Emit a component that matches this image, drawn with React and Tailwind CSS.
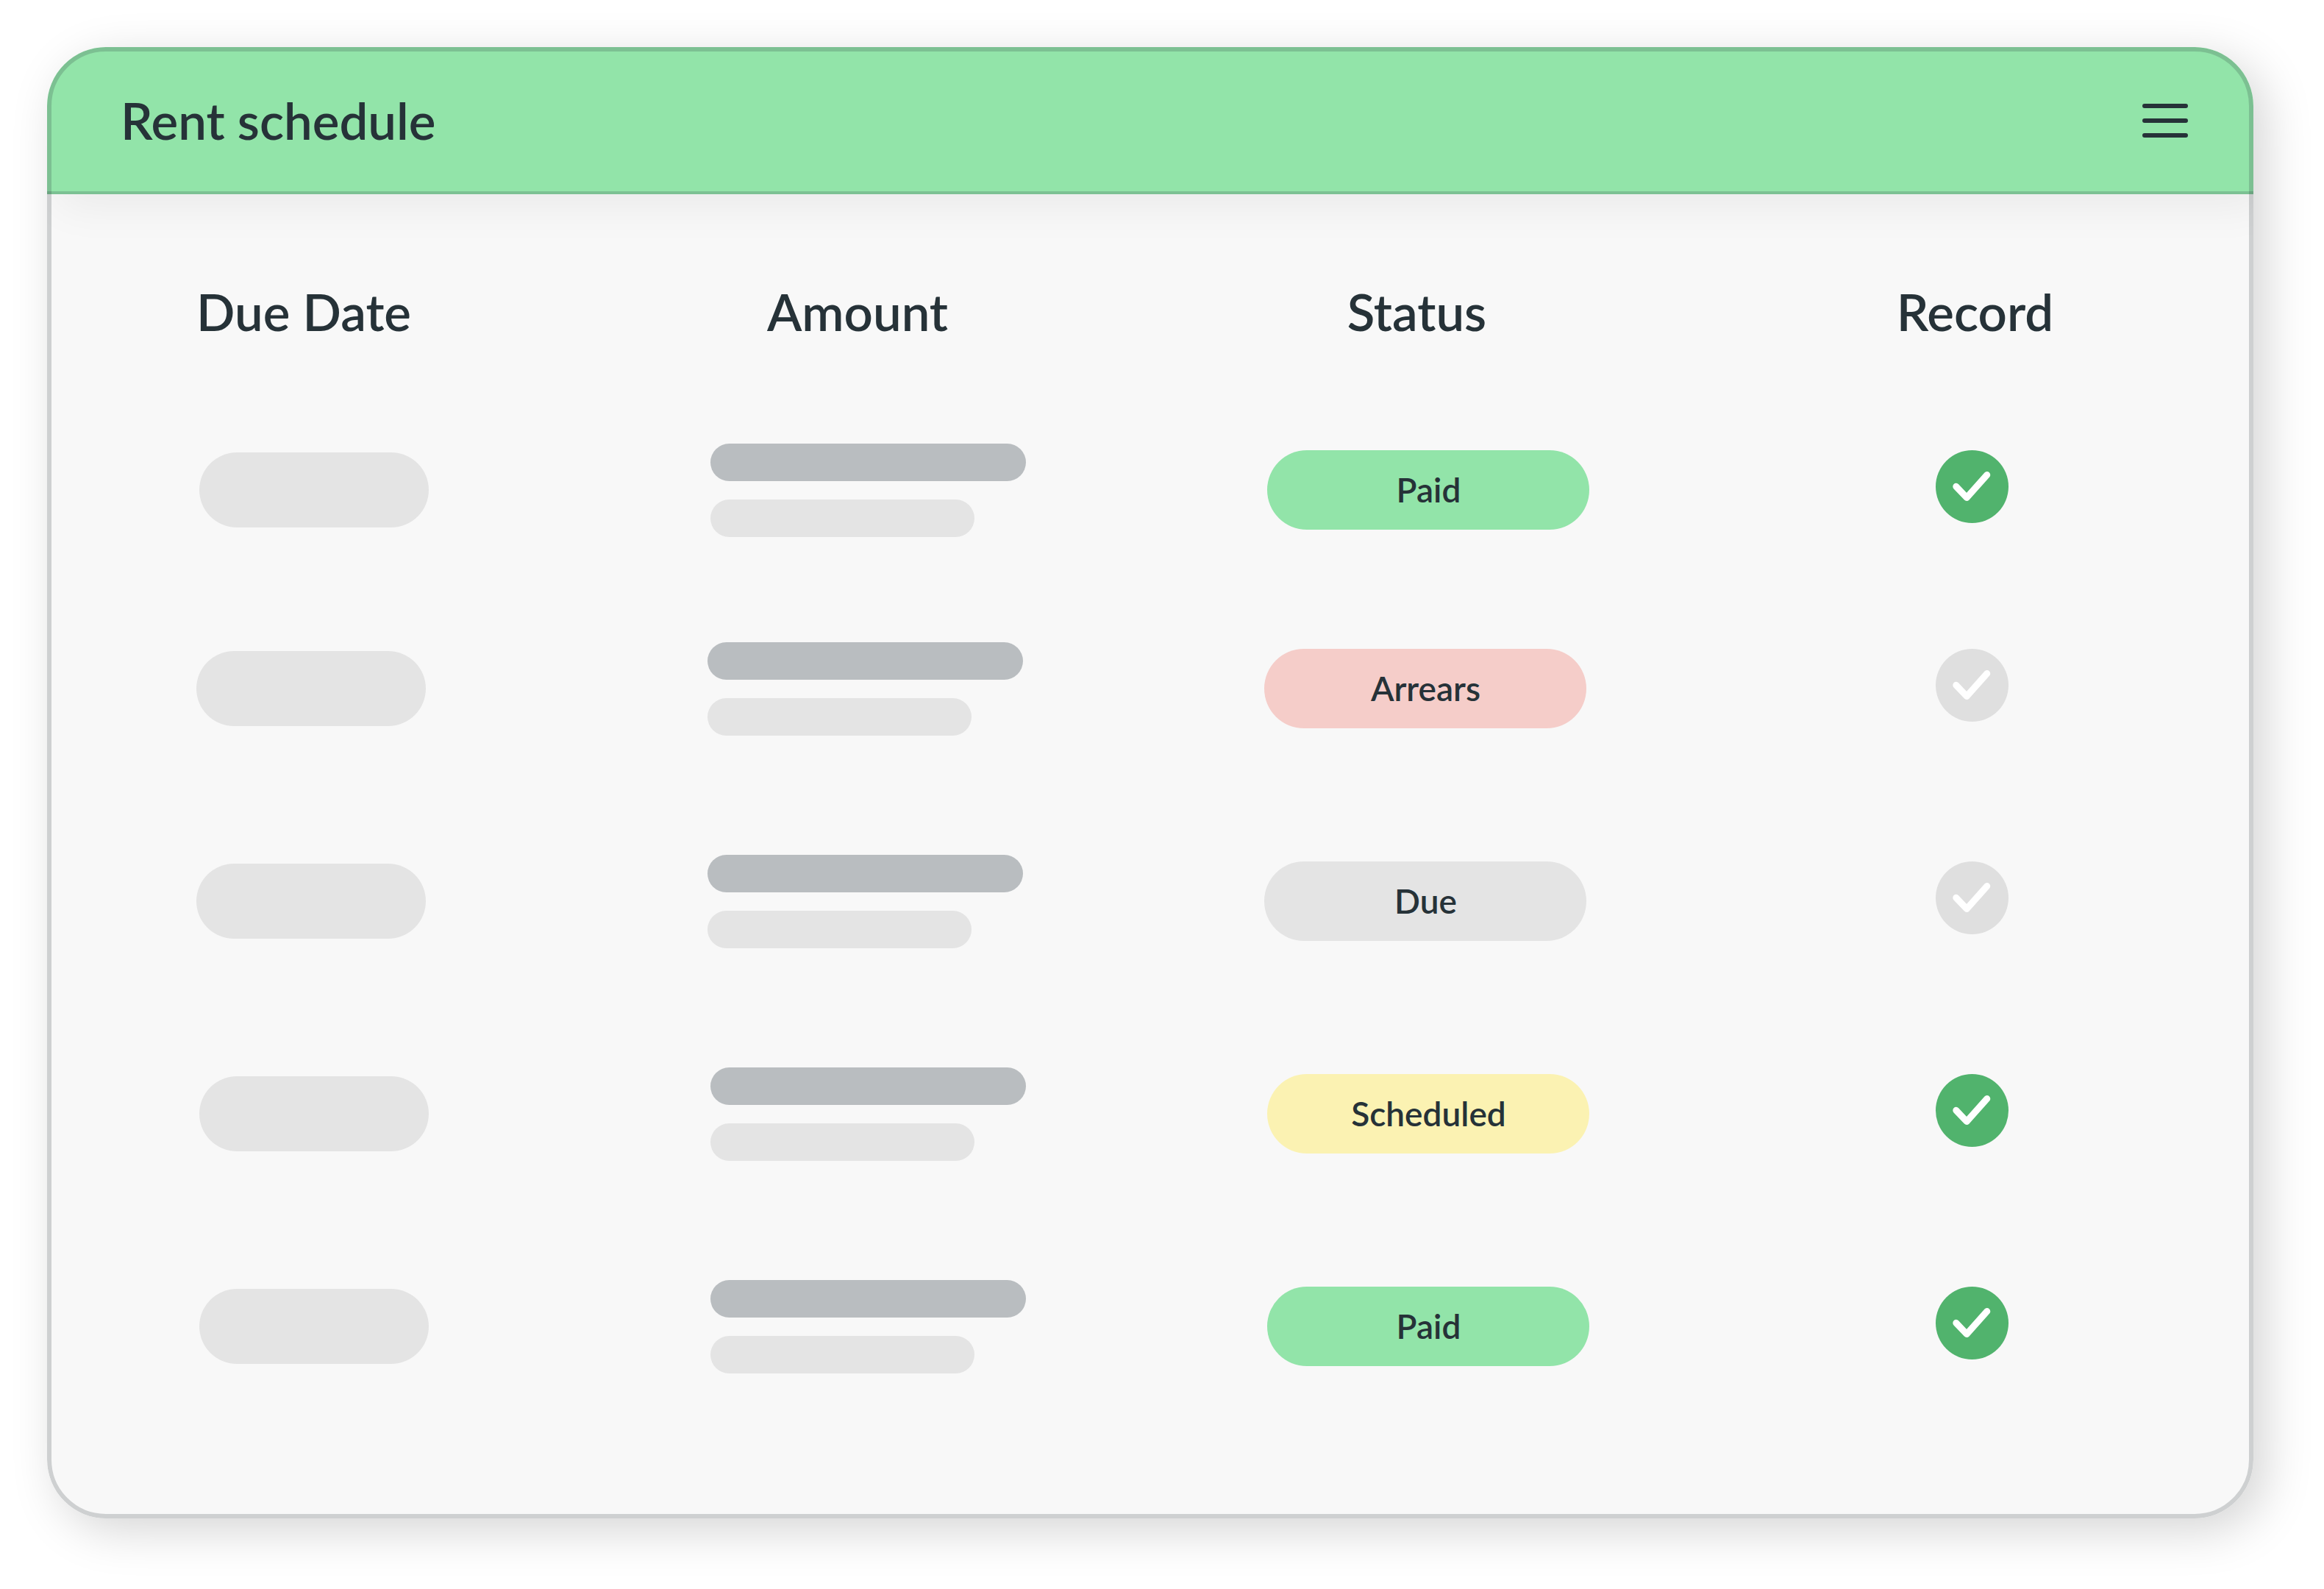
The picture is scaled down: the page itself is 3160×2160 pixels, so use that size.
const payments = [
  { id: 1, status: "Paid", recorded: true },
  { id: 2, status: "Arrears", recorded: false },
  { id: 3, status: "Due", recorded: false },
  { id: 4, status: "Scheduled", recorded: true },
  { id: 5, status: "Paid", recorded: true },
];

const statusColours = {
  Paid: "bg-[#92e4a9]",
  Arrears: "bg-[#f5cdc9]",
  Due: "bg-[#e4e4e4]",
  Scheduled: "bg-[#fbf2b2]",
};

function MenuButton() {
  return (
    <button type="button" aria-label="Open menu" className="cursor-pointer">
      <svg width="62" height="46" viewBox="0 0 62 46" fill="none" stroke="currentColor" strokeWidth="6" strokeLinecap="round">
        <path d="M3 3H59M3 23H59M3 43H59" />
      </svg>
    </button>
  );
}

function RecordToggle({ id, recorded }) {
  return (
    <label className="inline-grid place-items-center align-middle">
      <input
        type="checkbox"
        defaultChecked={recorded}
        aria-label={`Payment ${id} recorded`}
        className="col-start-1 row-start-1 size-[99px] appearance-none rounded-full bg-[#dfdfdf] checked:bg-[#51b36d]"
      />
      <svg
        className="pointer-events-none col-start-1 row-start-1"
        width="99"
        height="99"
        viewBox="0 0 99 99"
        fill="none"
        stroke="white"
        strokeWidth="9"
        strokeLinecap="round"
        strokeLinejoin="round"
      >
        <path d="M27.8 49.3L42.2 64.5L69.8 33.6" />
      </svg>
    </label>
  );
}

function PaymentRow({ payment, first }) {
  const pending = !payment.recorded;
  const cell = pending ? "pr-2 pb-0.5" : "pb-0.5";
  return (
    <tr className={first ? "h-[251px]" : "h-[289px]"}>
      <td className={cell}>
        <div className="mx-auto h-[102px] w-[312px] rounded-full bg-[#e4e4e4]" />
      </td>
      <td className={pending ? "pr-2" : ""}>
        <div className="mx-auto flex w-[429px] flex-col gap-[25px]">
          <div className="h-[51px] w-full rounded-full bg-[#b9bdc0]" />
          <div className="h-[51px] w-[359px] rounded-full bg-[#e4e4e4]" />
        </div>
      </td>
      <td className={`pl-1 ${cell}`}>
        <div className={`mx-auto w-[438px] rounded-full text-center text-[46px] leading-[108px] ${statusColours[payment.status]}`}>
          {payment.status}
        </div>
      </td>
      <td className="pb-2.5 text-center">
        <RecordToggle id={payment.id} recorded={payment.recorded} />
      </td>
    </tr>
  );
}

export default function App() {
  return (
    <main className="bg-white pt-16 pr-24 pb-24 pl-16 font-['Lato',sans-serif] font-semibold text-[#263238]">
      <section className="relative overflow-hidden rounded-[80px] bg-[#f8f8f8] shadow-[16px_16px_64px_rgba(0,0,0,0.17)]">
        <header className="flex h-[200px] items-center justify-between border-b-4 border-[#7cc193] bg-[#92e4a9] pt-1 pr-[89px] pl-[100px] shadow-[16px_16px_56px_rgba(0,0,0,0.06)]">
          <h1 className="text-[69px] leading-[84px]">Rent schedule</h1>
          <MenuButton />
        </header>

        <div className="px-1.5 pb-[116px]">
          <table className="w-full table-fixed">
            <colgroup>
              <col className="w-[23.9%]" />
              <col className="w-[26.5%]" />
              <col className="w-[24.4%]" />
              <col className="w-[25.2%]" />
            </colgroup>
            <thead>
              <tr className="h-[277px] text-[69px] leading-[84px]">
                <th scope="col" className="pt-[118px] pr-7 align-top font-semibold">Due Date</th>
                <th scope="col" className="pt-[118px] pr-7 align-top font-semibold">Amount</th>
                <th scope="col" className="pt-[118px] pr-7 align-top font-semibold">Status</th>
                <th scope="col" className="pt-[118px] pl-2 align-top font-semibold">Record</th>
              </tr>
            </thead>
            <tbody>
              {payments.map((payment, index) => (
                <PaymentRow key={payment.id} payment={payment} first={index === 0} />
              ))}
            </tbody>
          </table>
        </div>

        {/* Translucent frame drawn over the header and the body alike */}
        <div className="pointer-events-none absolute inset-0 rounded-[80px] border-6 border-[#263238]/20" />
      </section>
    </main>
  );
}
